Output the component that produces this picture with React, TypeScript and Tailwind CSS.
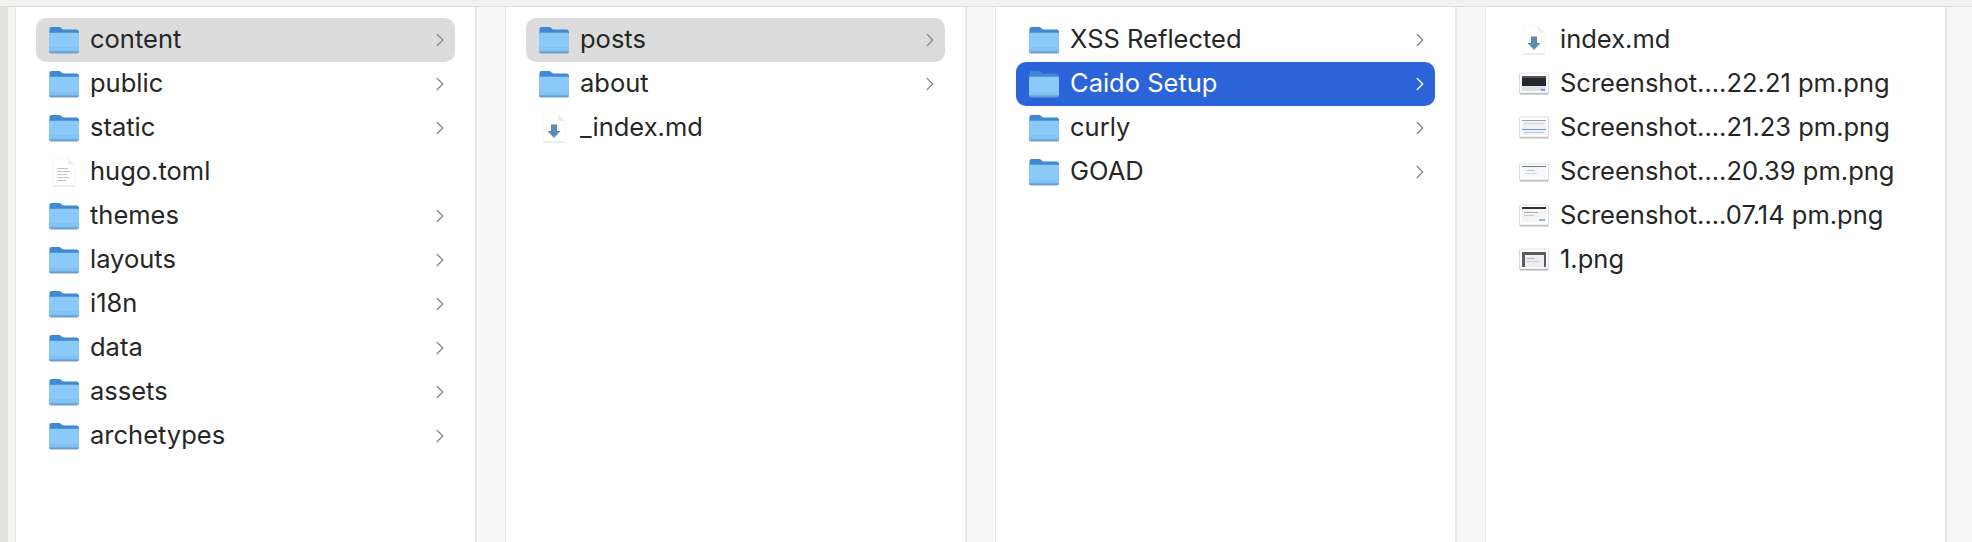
import { ChevronRight } from 'lucide-react'

type Kind = 'folder' | 'text' | 'md' | 'shot1' | 'shot2' | 'shot3' | 'shot4' | 'shot5'

type Item = { name: string; kind: Kind; state?: 'open' | 'active' }

const columns: Item[][] = [
  [
    { name: 'content', kind: 'folder', state: 'open' },
    { name: 'public', kind: 'folder' },
    { name: 'static', kind: 'folder' },
    { name: 'hugo.toml', kind: 'text' },
    { name: 'themes', kind: 'folder' },
    { name: 'layouts', kind: 'folder' },
    { name: 'i18n', kind: 'folder' },
    { name: 'data', kind: 'folder' },
    { name: 'assets', kind: 'folder' },
    { name: 'archetypes', kind: 'folder' },
  ],
  [
    { name: 'posts', kind: 'folder', state: 'open' },
    { name: 'about', kind: 'folder' },
    { name: '_index.md', kind: 'md' },
  ],
  [
    { name: 'XSS Reflected', kind: 'folder' },
    { name: 'Caido Setup', kind: 'folder', state: 'active' },
    { name: 'curly', kind: 'folder' },
    { name: 'GOAD', kind: 'folder' },
  ],
  [
    { name: 'index.md', kind: 'md' },
    { name: 'Screenshot....22.21 pm.png', kind: 'shot1' },
    { name: 'Screenshot....21.23 pm.png', kind: 'shot2' },
    { name: 'Screenshot....20.39 pm.png', kind: 'shot3' },
    { name: 'Screenshot....07.14 pm.png', kind: 'shot4' },
    { name: '1.png', kind: 'shot5' },
  ],
]

function FolderIcon() {
  return (
    <svg width="30" height="28" viewBox="0 0 30 28" className="shrink-0 blur-[0.3px]">
      <path d="M0.500 3C0.500 1.700 1.300 1 2.500 1h7.500c1 0 1.600.4 2.300 1.200L14 3.500h13.500C29 3.500 30 4.500 30 6v8H0z" fill="#3f88d4" />
      <path d="M0 8C0 7.200.7 6.800 1.500 6.800h27c.8 0 1.500.4 1.500 1.200v17c0 1.400-.9 2-2.200 2H2.200C.9 27 0 26.400 0 25z" fill="#8bc9f9" />
      <rect x="0" y="21.500" width="30" height="0.800" fill="#7dbcef" />
      <rect x="0" y="23.500" width="30" height="0.800" fill="#7dbcef" />
      <path d="M0 25.300h30c0 1.500-.9 2.200-2.300 2.200H2.300C.9 27.500 0 26.800 0 25.300z" fill="#6a9fcf" />
    </svg>
  )
}

function DocShape({ children }: { children?: React.ReactNode }) {
  return (
    <svg width="30" height="30" viewBox="0 0 30 30" className="shrink-0 blur-[0.3px]">
      <path d="M4 1h15l7 7v21H4z" fill="#ffffff" stroke="#f8f8f8" strokeWidth="0.8" />
      <path d="M19 1v7h7z" fill="#efefef" />
      <rect x="4" y="28.500" width="22" height="1" fill="#dedede" />
      {children}
    </svg>
  )
}

function Thumb({ kind }: { kind: Kind }) {
  const frame = (y: number, h: number, inner: React.ReactNode) => (
    <svg width="30" height="30" viewBox="0 0 30 30" className="shrink-0 blur-[0.3px]">
      <rect x="0.500" y={y + 1.500} width="29" height={h} rx="1" fill="#b0b0b0" />
      <rect x="0.500" y={y} width="29" height={h} rx="1" fill="#ffffff" stroke="#d8d8d8" strokeWidth="0.8" />
      {inner}
    </svg>
  )
  if (kind === 'shot1')
    return frame(4, 20, (
      <>
        <rect x="3" y="7" width="24" height="2" fill="#54565c" />
        <rect x="3" y="9" width="24" height="8" fill="#24272d" />
        <rect x="3" y="17" width="24" height="5" fill="#dfe2e8" />
        <rect x="22" y="20" width="4" height="1.500" fill="#5b8fd8" />
      </>
    ))
  if (kind === 'shot2')
    return frame(4, 20, (
      <>
        <rect x="3" y="7" width="24" height="15" fill="#eef1f6" />
        <rect x="3" y="7" width="24" height="1" fill="#9aa2b0" />
        <rect x="5" y="10" width="20" height="1" fill="#d3d8e0" />
        <rect x="3" y="16" width="24" height="1" fill="#6d9ae4" />
        <rect x="5" y="19" width="20" height="1" fill="#c0c6d0" />
      </>
    ))
  if (kind === 'shot3')
    return frame(7, 16, (
      <>
        <rect x="3" y="9" width="24" height="1" fill="#6b7280" />
        <rect x="3" y="10" width="24" height="10" fill="#f6f7fb" />
        <rect x="8" y="13" width="8" height="1" fill="#b4c5e8" />
        <rect x="6" y="16" width="12" height="1" fill="#d5dbe7" />
      </>
    ))
  if (kind === 'shot4')
    return frame(4, 20, (
      <>
        <rect x="3" y="6" width="24" height="2" fill="#2b2d33" />
        <rect x="3" y="8" width="24" height="13" fill="#f4f4f4" />
        <rect x="5" y="11" width="14" height="1" fill="#a8a8a8" />
        <rect x="5" y="14" width="10" height="1" fill="#c8c8c8" />
        <rect x="20" y="18" width="6" height="2" fill="#8fb4e8" />
      </>
    ))
  return frame(4, 20, (
    <>
      <rect x="3" y="7" width="24" height="15" fill="#5a5c60" />
      <rect x="6" y="10" width="19" height="12" fill="#eceef1" />
      <rect x="8" y="13" width="8" height="1" fill="#a9b0bc" />
      <rect x="8" y="16" width="12" height="1" fill="#c6cbd4" />
    </>
  ))
}

function ItemIcon({ kind }: { kind: Kind }) {
  if (kind === 'folder') return <FolderIcon />
  if (kind === 'text')
    return (
      <DocShape>
        <rect x="8" y="11" width="11" height="1" fill="#c4c4c4" />
        <rect x="8" y="14" width="13" height="1" fill="#c4c4c4" />
        <rect x="8" y="17" width="10" height="1" fill="#c4c4c4" />
        <rect x="8" y="20" width="12" height="1" fill="#c4c4c4" />
        <rect x="8" y="23" width="9" height="1" fill="#c4c4c4" />
      </DocShape>
    )
  if (kind === 'md')
    return (
      <DocShape>
        <path d="M12 11.500h6v6.500h3.500l-6.500 7-6.500-7H12z" fill="#5a8cb0" />
      </DocShape>
    )
  return <Thumb kind={kind} />
}

function Row({ item }: { item: Item }) {
  const bg =
    item.state === 'open'
      ? 'bg-[#dcdcdc] text-[#262626]'
      : item.state === 'active'
        ? 'bg-[#2b63d9] text-white'
        : 'text-[#262626]'
  return (
    <div className={`flex h-11 items-center gap-[11px] rounded-[10px] pl-[13px] pr-1 ${bg}`}>
      <ItemIcon kind={item.kind} />
      <span className="mb-[2px] flex-1 whitespace-nowrap text-[25.5px] leading-[32px]">{item.name}</span>
      {item.kind === 'folder' && (
        <ChevronRight
          size={22}
          strokeWidth={1.500}
          className={item.state === 'active' ? 'text-white' : 'text-[#8a8a8a]'}
        />
      )}
    </div>
  )
}

export default function App() {
  return (
    <div className="flex h-[542px] w-[1972px] flex-col overflow-hidden bg-white font-['Inter',sans-serif]">
      <div className="h-[7px] shrink-0 border-b border-[#dcdcdc] bg-[#f3f2f0]" />
      <div className="flex min-h-0 flex-1">
        <div className="w-2 shrink-0 bg-[#e3e2df]" />
        <div className="w-2 shrink-0 border-r border-[#e8e8e8] bg-[#f6f6f5]" />
        {columns.map((items, i) => (
          <div key={i} className="flex shrink-0">
            <div className="flex w-[461px] flex-col border-r-2 border-[#e8e8e8] bg-white px-5 pt-[11px]">
              {items.map((item) => (
                <Row key={item.name} item={item} />
              ))}
            </div>
            <div className="w-[29px] border-r border-[#e8e8e8] bg-[#f7f7f7]" />
          </div>
        ))}
      </div>
    </div>
  )
}
